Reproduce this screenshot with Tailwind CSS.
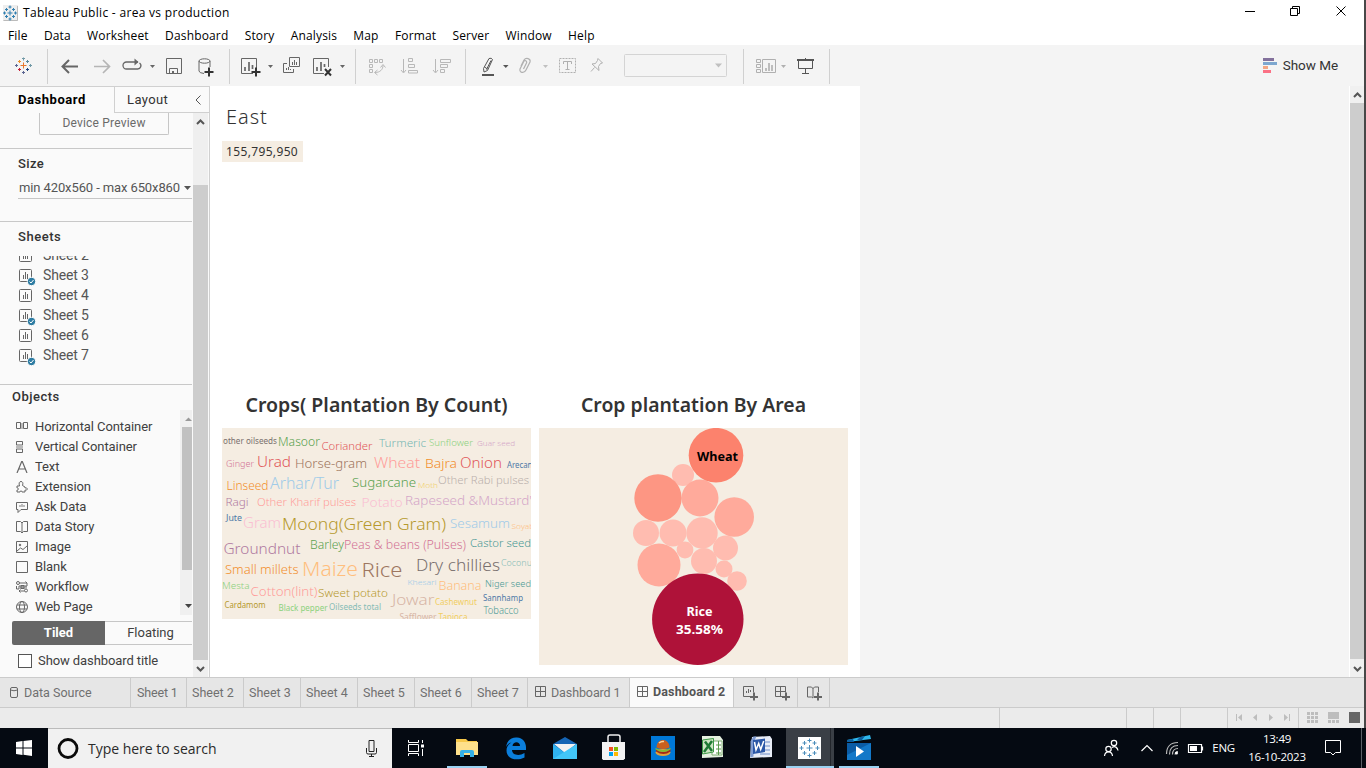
<!DOCTYPE html>
<html lang="en">
<head>
<meta charset="utf-8">
<title>Tableau Public - area vs production</title>
<script src="https://cdn.jsdelivr.net/npm/@tailwindcss/browser@4"></script>
</head>
<body class="w-[1366px] h-[768px] overflow-hidden bg-white font-['Roboto',sans-serif] text-[13px] text-[#555]">
<!-- shared symbols -->
<svg class="hidden">
  <symbol id="sheet" viewBox="0 0 17 17" fill="none" stroke="#666"><rect x=".5" y=".5" width="12" height="12" rx="1"/><path d="M4.5 6v4M6.5 3v7M8.5 5v5"/></symbol>
  <symbol id="sheetc" viewBox="0 0 17 17" fill="none" stroke="#666"><rect x=".5" y=".5" width="12" height="12" rx="1"/><path d="M4.500 6v4M6.5 3v7M8.5 5v5"/><circle cx="12.500" cy="12.500" r="4.200" fill="#2f7da3" stroke="#fafafa"/><path d="M10.500 12.500l1.500 1.500 2.500-3" stroke="#fff"/></symbol>
  <symbol id="grid" viewBox="0 0 12 12" fill="none" stroke="#666"><path d="M.5.5h10v10H.5zM5.500.5v10M.5 5.500h10"/></symbol>
</svg>
<div class="flex h-[728px]">
<div class="w-[1364px] flex flex-col">
  <!-- title bar -->
  <div class="h-[25px] flex items-center bg-white text-black font-['Open_Sans','Noto_Sans',sans-serif] text-[12px]">
    <svg class="ml-[3px] mr-[5px]" width="15" height="16" viewBox="0 0 15 16" fill="none"><path d="M0 0h15v16H0z" fill="#eee"/><path d="M.5 15.500h14V1" stroke="#bbb"/><path d="M7 5.500v5M4.500 8h5M7 .500v3M5.500 2h3M7 12.500v3M5.500 14h3M1.500 6.500v3M0 8h3M12.500 6.500v3M11 8h3M3.500 3v3M2 4.500h3M10.500 3v3M9 4.500h3M3.500 10v3M2 11.500h3M10.500 10v3M9 11.500h3" stroke="#2f7fb0"/></svg>
    <span class="grow tracking-[0.300px]">Tableau Public - area vs production</span>
    <svg width="120" height="24" viewBox="1244 0 120 24" fill="none" stroke="#000"><path d="M1245 10.500h10M1290.500 7.500h7v7h-7zM1292.500 7v-1.500h7v7h-1.500M1336.500 5.500l9 9M1345.500 5.500l-9 9"/></svg>
  </div>
  <!-- menu -->
  <div class="h-5 pt-[2px] flex items-center pl-2 gap-[16.300px] bg-white text-black font-['Open_Sans','Noto_Sans',sans-serif] text-[12px] tracking-[0.150px]">
    <span>File</span><span>Data</span><span>Worksheet</span><span>Dashboard</span><span>Story</span><span>Analysis</span><span>Map</span><span>Format</span><span>Server</span><span>Window</span><span>Help</span>
  </div>
  <!-- toolbar -->
  <div class="h-[41px] flex bg-[#f4f4f4]">
    <svg width="47" height="41" viewBox="0 45 47 41" fill="none" stroke-width="1"><g stroke="#e8762c"><path d="M23.500 62.500v6M20.500 65.500h6"/><path d="M19.500 60v3M18 61.500h3" stroke="#eb912b"/></g><path d="M27.500 60v3M26 61.500h3" stroke="#59879b"/><path d="M19.500 68v3M18 69.500h3" stroke="#c72037"/><path d="M27.500 68v3M26 69.500h3" stroke="#1f457e"/><path d="M23.500 57.500v3M22 58.500h3M30.500 64v3M29 65.500h3" stroke="#7199a6"/><path d="M23.500 71v3M22 72.500h3M16.500 64v3M15 65.500h3" stroke="#5b6591"/></svg>
    <svg width="182" height="41" viewBox="47 45 182 41" fill="none" stroke="#666"><path d="M47.500 49v35" stroke="#d0d0d0"/><path d="M78 66.500H63M69 60l-6.500 6.500 6.500 6.500" stroke-width="2"/><path d="M94 66.500h15M103 60l6.500 6.500-6.500 6.500" stroke="#b5b5b5" stroke-width="1.700"/><path d="M138 62h-11.500a3.300 3.300 0 0 0 0 7h11a3.300 3.300 0 0 0 2-6" stroke-width="1.300"/><path d="M134.500 58.500l4 3.500-4 3.500z" fill="#666" stroke="none"/><path d="M150 65h5l-2.500 3z" fill="#666" stroke="none"/><path d="M166.500 58.500h15v15h-15zM169.500 73.500v-5h8v5M172.500 71v2M173.500 71v2"/><ellipse cx="204.500" cy="61" rx="5.500" ry="2.200"/><path d="M199 61v10q0 2 5 2.500M210 61v6"/><path d="M209 67.500v9M204.500 72h9" stroke="#333" stroke-width="2"/></svg>
    <svg width="126" height="41" viewBox="229 45 126 41" fill="none" stroke="#666"><path d="M229.500 49v35" stroke="#d0d0d0"/><path d="M253 73.500h-11.500v-15h15V68"/><path d="M245 67v4M249 62v9M252.500 65v4" stroke-width="1.700"/><path d="M256 67.500v9M251.500 72h9" stroke="#333" stroke-width="2"/><path d="M268 65h5l-2.500 3zM340 65h5l-2.500 3z" fill="#666" stroke="none"/><path d="M289.500 57.500h10v9h-10zM287 63.500h-3.500v9h10V69M292.500 62v3M294.500 60v5M296.500 62v3M286.500 68v2M288.500 67v3M290.500 69v1"/><path d="M324 73.500h-10.500v-15h15V67"/><path d="M317 67v4M321 62v9M324.500 64v3" stroke-width="1.700"/><path d="M325 69l6 6.500M331 69l-6 6.500" stroke="#333" stroke-width="2"/></svg>
    <svg width="110" height="41" viewBox="355 45 110 41" fill="none" stroke="#b8b8b8"><path d="M355.500 49v35" stroke="#d0d0d0"/><path d="M369.500 59.500h3v3h-3zM374.500 59.500h3v3h-3zM379.500 59.500h3v3h-3zM369.500 64.500h3v3h-3zM369.500 69.500h3v3h-3zM375 72.500c5 0 8-3 8-7"/><path d="M380.500 67.500l2.500-3 2.500 3M377.500 70l-3 2.500 3 2.500"/><path d="M403.500 59v13M401 70l2.500 3 2.500-3M408.500 58.500h4v3h-4zM408.500 64.500h6v3h-6zM408.500 70.500h9v2.500h-9z"/><path d="M435.500 59v13M433 70l2.500 3 2.500-3M440.500 59.500h10v3h-10zM440.500 64.500h7v3h-7zM440.500 69.500h4v3h-4z"/></svg>
    <svg width="278" height="41" viewBox="465 45 278 41" fill="none" stroke="#b0b0b0"><path d="M465.500 49v35" stroke="#d0d0d0"/><g stroke="#555"><path d="M489 58.500q2.500-1 3.500 1l-5 11-3.500 1.500-.500-3.500z"/><path d="M484.500 67l3 2M486.500 69.500l4.500-9"/><path d="M482 75h12" stroke-width="2"/></g><path d="M503 65h5.500l-2.700 3z" fill="#555" stroke="none"/><path d="M543 65h5l-2.500 3zM715 63.500h7l-3.500 4z" fill="#c0c0c0" stroke="none"/><path d="M521 66l3-6c2-3 7-1.500 6 2l-4 8c-2 4-7 2.500-6-1l3.500-7c1-2.500 4-1 3 1l-3 6" stroke-width="1.200"/><path d="M559.500 58.500h16v14h-16z" stroke-dasharray="2 1"/><path d="M563.500 64v-2.500h8V64M567.500 62v8M565.500 69.500h4"/><path d="M598 58.500l4.500 4.500-2 .500-2 3 .500 4-7-6.500 3.500-.500 2-3zM594.500 67.500l-3.500 4"/><rect x="624.500" y="54.500" width="102" height="22" rx="1" stroke="#d4d4d4"/></svg>
    <svg width="88" height="41" viewBox="743 45 88 41" fill="none" stroke="#b0b0b0"><path d="M743.500 49v35M829.500 49v35" stroke="#d0d0d0"/><path d="M762.500 59.500h13v13h-13zM756.500 59.500h4v3h-4zM756.500 64.500h4v3h-4zM756.500 69.500h4v3h-4z"/><path d="M766 68v3M769 63v8M772 65v6" stroke-width="1.600"/><path d="M781 65h5l-2.500 3z" fill="#b0b0b0" stroke="none"/><g stroke="#555"><path d="M797 60h17" stroke-width="2"/><path d="M798.500 60v8.500h14V60M805.500 58v2M805.500 69v4M802 73.500h7"/></g></svg>
    <div class="grow"></div>
    <div class="flex items-center mr-[26px] text-[#333] text-[13.500px]">
      <svg class="mr-[6px]" width="15" height="15"><path d="M1 0h11v3H1z" fill="#83719c"/><path d="M1 4h14v3H1z" fill="#7da7cf"/><path d="M1 8h5v3H1z" fill="#f3a683"/><path d="M1 12h8v3H1z" fill="#fb7185"/></svg>
      <span class="tracking-[-0.050px]">Show Me</span>
    </div>
  </div>
  <!-- main area -->
  <div class="h-[591px] flex">
    <aside class="w-[210px] flex flex-col bg-[#fafafa] border-t border-r border-[#d0d0d0]">
      <div class="h-[26px] flex shrink-0">
        <div class="w-[114px] pl-[18px] leading-[25px] font-bold text-black tracking-[0.550px]">Dashboard</div>
        <div class="grow flex justify-between items-center border-l border-b border-[#d0d0d0] pl-3 pr-[8px] text-[#333] tracking-[0.400px]"><span>Layout</span><svg width="6" height="10" fill="none" stroke="#555"><path d="M5.500.500L1 5l4.500 4.500"/></svg></div>
      </div>
      <div class="h-[564px] flex">
        <div class="w-[192px] overflow-hidden">
          <section class="h-[35px]"><div class="ml-[39px] w-[130px] h-[22px] border border-t-0 border-[#c6c6c6] rounded-b-xs text-center leading-[20px] text-[12px] text-[#6a6a6a] tracking-[0.200px]">Device Preview</div></section>
          <section class="h-[73px] border-t border-[#c8c8c8] pl-[18px] pt-[5px]">
            <h3 class="leading-[19px] text-[#333] font-medium tracking-[0.350px]">Size</h3>
            <div class="mt-[6px] h-[20px] border-b border-[#c6c6c6] flex items-center gap-1 whitespace-nowrap pl-px tracking-[-0.110px] pb-px">min 420x560 - max 650x860<svg width="7" height="4" fill="#555"><path d="M0 0h7L3.500 4z"/></svg></div>
          </section>
          <section class="h-[163px] border-t border-[#c8c8c8]">
            <h3 class="h-[34px] pl-[18px] leading-[29px] text-[#333] font-medium tracking-[0.550px]">Sheets</h3>
            <div class="h-[120px] overflow-hidden pl-[19px] text-[14px] tracking-[-0.150px]">
              <div class="-mt-[11px] h-5 flex items-center gap-[7px]"><svg class="w-[17px] h-[17px] mt-1"><use href="#sheet"/></svg>Sheet 2</div>
              <div class="h-5 flex items-center gap-[7px]"><svg class="w-[17px] h-[17px] mt-1"><use href="#sheetc"/></svg>Sheet 3</div>
              <div class="h-5 flex items-center gap-[7px]"><svg class="w-[17px] h-[17px] mt-1"><use href="#sheet"/></svg>Sheet 4</div>
              <div class="h-5 flex items-center gap-[7px]"><svg class="w-[17px] h-[17px] mt-1"><use href="#sheetc"/></svg>Sheet 5</div>
              <div class="h-5 flex items-center gap-[7px]"><svg class="w-[17px] h-[17px] mt-1"><use href="#sheet"/></svg>Sheet 6</div>
              <div class="h-5 flex items-center gap-[7px]"><svg class="w-[17px] h-[17px] mt-1"><use href="#sheetc"/></svg>Sheet 7</div>
            </div>
          </section>
          <section class="h-[293px] border-t border-[#c8c8c8]">
            <h3 class="h-[25px] pl-3 leading-[24px] text-[#333] font-medium tracking-[0.500px]">Objects</h3>
            <div class="h-[205px] flex overflow-hidden">
              <div class="w-[180px] pt-[7px] pl-4 text-[#404040] text-[13px] tracking-[-0.080px]">
                <div class="h-5 flex items-center gap-[7px]"><svg width="12" height="12" fill="none" stroke="#666"><path d="M.5 1.500h4v6h-4zM7.500 1.500h4v6h-4z"/><path d="M5 2h2v6H5z" fill="#bbb" stroke="none"/></svg>Horizontal Container</div>
                <div class="h-5 flex items-center gap-[7px]"><svg width="12" height="12" fill="none" stroke="#666"><path d="M.5.500h6v3.500h-6zM.5 8h6v3.500h-6z"/><path d="M0 4.500h7v3H0z" fill="#bbb" stroke="none"/></svg>Vertical Container</div>
                <div class="h-5 flex items-center gap-[7px]"><svg width="12" height="12" fill="none" stroke="#666" stroke-width="1.200"><path d="M1 12L5.700.500h.6L11 12M3 8h6"/></svg>Text</div>
                <div class="h-5 flex items-center gap-[7px]"><svg width="12" height="12" fill="none" stroke="#666"><path d="M1 5h2.500c-1-3 0-4.500 1.500-4.500S7.500 2 6.500 4.500L9 6v1c3-1 3 3 0 2v2H6c0-1.500-2-1.500-2 0H1V9c2 0 2-2 0-2z"/></svg>Extension</div>
                <div class="h-5 flex items-center gap-[7px]"><svg width="12" height="12" fill="none" stroke="#666"><path d="M.5 1.500h11v7H5l-3 3v-3H.5z"/><path d="M3 4h2V3h2v1h2v2H3z" fill="#bbb" stroke="none"/></svg>Ask Data</div>
                <div class="h-5 flex items-center gap-[7px]"><svg width="12" height="12" fill="none" stroke="#666"><path d="M6 2L4.500.500h-4v10h4L6 12l1.500-1.500h4v-10h-4zM6 2v10"/></svg>Data Story</div>
                <div class="h-5 flex items-center gap-[7px]"><svg width="12" height="12" fill="none" stroke="#666"><path d="M.5.500h11v11H.5zM1 10l3.500-3L7 8.500 11 5"/><circle cx="4" cy="4" r=".8" fill="#666"/></svg>Image</div>
                <div class="h-5 flex items-center gap-[7px]"><svg width="12" height="12" fill="none" stroke="#666"><path d="M.5.500h11v11H.5z"/></svg>Blank</div>
                <div class="h-5 flex items-center gap-[7px]"><svg width="12" height="12" fill="none" stroke="#666"><circle cx="2" cy="2" r="1.500"/><path d="M3.500 2H11v3H3v3H.500V5M4 7h5M10 5v2.500M3.500 10h5M4.500 8.500L3 10l1.500 1.500M9.500 .500L11 2"/><circle cx="10" cy="9.500" r="1.500"/><path d="M5 4.500h3v3H5z" fill="#999"/></svg>Workflow</div>
                <div class="h-5 flex items-center gap-[7px]"><svg width="12" height="12" fill="none" stroke="#666"><circle cx="6" cy="6" r="5.500"/><ellipse cx="6" cy="6" rx="2.500" ry="5.500"/><path d="M1 4h10M1 8h10"/></svg>Web Page</div>
              </div>
              <div class="w-3 bg-[#f0f0f0] flex flex-col">
                <svg width="12" height="17"><path d="M5 11h7L8.500 7.500z" fill="#999"/></svg>
                <div class="ml-[2px] h-[143px] bg-[#c1c1c1]"></div>
                <svg width="12" height="45"><path d="M5 34h7L8.500 38z" fill="#444"/></svg>
              </div>
            </div>
            <div class="mt-[6px] ml-3 h-6 flex text-center leading-[23px]"><div class="w-[93px] rounded-l-xs bg-[#666] text-white font-bold">Tiled</div><div class="grow border-y border-[#c6c6c6] leading-[22px] text-[#404040] pl-[4px]">Floating</div></div>
            <div class="mt-[6px] ml-[18px] flex items-center gap-[6px] text-[#404040] tracking-[-0.090px]"><i class="w-[14px] h-[14px] border border-[#555] bg-white"></i>Show dashboard title</div>
          </section>
        </div>
        <div class="ml-px w-[15px] bg-[#efefef]">
          <svg width="15" height="72"><path d="M4 11l3.500-3.500L11 11" fill="none" stroke="#555" stroke-width="2"/></svg>
          <div class="h-[475px] bg-[#cdcdcd]"></div>
          <svg width="15" height="17"><path d="M4 7l3.500 3.500L11 7" fill="none" stroke="#555" stroke-width="2"/></svg>
        </div>
      </div>
    </aside>
    <main class="w-[650px] bg-white pl-3 pt-[16px] font-['Noto_Sans',sans-serif] text-[#333]">
      <h1 class="pl-1 h-[39px] leading-[30px] text-[20px] font-light tracking-[0.950px]">East</h1>
      <div class="w-[81px] h-[21px] bg-[#f5ede2] pl-1 leading-[21px] text-[12px] tracking-[0.350px]">155,795,950</div>
      <div class="mt-[230px] flex gap-2">
        <div class="w-[309px]">
          <h2 class="h-[36px] text-center leading-[26px] text-[19px] font-semibold"><svg width="309" height="36" viewBox="222 392 309 36" fill="#333"><text x="245.500" y="412" textLength="262" lengthAdjust="spacingAndGlyphs">Crops( Plantation By Count)</text></svg></h2>
          <!-- word cloud -->
          <svg class="bg-[#f5ede2] overflow-hidden" width="309" height="191" viewBox="222 428 309 191">
<g class="font-['Noto_Sans',sans-serif] font-light">
<text x="223" y="444" font-size="8" textLength="54" lengthAdjust="spacingAndGlyphs" font-weight="400" fill="#79706e">other oilseeds</text>
<text x="278" y="446" font-size="12" textLength="42" lengthAdjust="spacingAndGlyphs" fill="#59a14f">Masoor</text>
<text x="321.500" y="450" font-size="11" textLength="51" lengthAdjust="spacingAndGlyphs" fill="#e15759">Coriander</text>
<text x="379" y="447" font-size="11.500" textLength="47" lengthAdjust="spacingAndGlyphs" fill="#76b7b2">Turmeric</text>
<text x="429" y="446" font-size="9" textLength="44" lengthAdjust="spacingAndGlyphs" fill="#8cd17d">Sunflower</text>
<text x="477" y="446" font-size="8" textLength="38" lengthAdjust="spacingAndGlyphs" fill="#d4a6c8">Guar seed</text>
<text x="226" y="467" font-size="9.500" textLength="28" lengthAdjust="spacingAndGlyphs" fill="#d37295">Ginger</text>
<text x="257" y="467" font-size="15" textLength="34" lengthAdjust="spacingAndGlyphs" fill="#e15759">Urad</text>
<text x="295" y="468" font-size="13" textLength="72" lengthAdjust="spacingAndGlyphs" fill="#9d7660">Horse-gram</text>
<text x="374" y="468" font-size="15" textLength="46" lengthAdjust="spacingAndGlyphs" fill="#ff9d9a">Wheat</text>
<text x="425" y="468" font-size="13" textLength="32" lengthAdjust="spacingAndGlyphs" fill="#f28e2b">Bajra</text>
<text x="460" y="468" font-size="15" textLength="42" lengthAdjust="spacingAndGlyphs" fill="#e15759">Onion</text>
<text x="507" y="468" font-size="8" textLength="33" lengthAdjust="spacingAndGlyphs" font-weight="400" fill="#4e79a7">Arecanut</text>
<text x="226.500" y="490" font-size="12" textLength="42" lengthAdjust="spacingAndGlyphs" fill="#f28e2b">Linseed</text>
<text x="270" y="489" font-size="15.500" textLength="69" lengthAdjust="spacingAndGlyphs" fill="#a0cbe8">Arhar/Tur</text>
<text x="352" y="487" font-size="12.500" textLength="64" lengthAdjust="spacingAndGlyphs" fill="#59a14f">Sugarcane</text>
<text x="418" y="487.500" font-size="8" textLength="20" lengthAdjust="spacingAndGlyphs" fill="#f1ce63">Moth</text>
<text x="438" y="484" font-size="11" textLength="91" lengthAdjust="spacingAndGlyphs" fill="#bab0ac">Other Rabi pulses</text>
<text x="225.500" y="506" font-size="11" textLength="23" lengthAdjust="spacingAndGlyphs" fill="#b07aa1">Ragi</text>
<text x="257" y="506" font-size="11" textLength="99" lengthAdjust="spacingAndGlyphs" fill="#ff9d9a">Other Kharif pulses</text>
<text x="361.500" y="507" font-size="12.500" textLength="41" lengthAdjust="spacingAndGlyphs" fill="#fabfd2">Potato</text>
<text x="405" y="505" font-size="12.500" textLength="127" lengthAdjust="spacingAndGlyphs" fill="#d4a6c8">Rapeseed &amp;Mustard'</text>
<text x="226" y="521" font-size="8" textLength="16" lengthAdjust="spacingAndGlyphs" font-weight="400" fill="#4e79a7">Jute</text>
<text x="243" y="528" font-size="15" textLength="38" lengthAdjust="spacingAndGlyphs" fill="#fabfd2">Gram</text>
<text x="282" y="530" font-size="17" textLength="164" lengthAdjust="spacingAndGlyphs" fill="#b6992d">Moong(Green Gram)</text>
<text x="450" y="528" font-size="13" textLength="60" lengthAdjust="spacingAndGlyphs" fill="#a0cbe8">Sesamum</text>
<text x="511.500" y="529" font-size="8" textLength="37" lengthAdjust="spacingAndGlyphs" fill="#ffbe7d">Soyabean</text>
<text x="223.500" y="554" font-size="15" textLength="77" lengthAdjust="spacingAndGlyphs" fill="#b07aa1">Groundnut</text>
<text x="310" y="549" font-size="12" textLength="34" lengthAdjust="spacingAndGlyphs" fill="#59a14f">Barley</text>
<text x="344" y="549" font-size="12" textLength="122" lengthAdjust="spacingAndGlyphs" fill="#d37295">Peas &amp; beans (Pulses)</text>
<text x="470" y="547" font-size="11.500" textLength="61" lengthAdjust="spacingAndGlyphs" fill="#499894">Castor seed</text>
<text x="225" y="574" font-size="12" textLength="73.500" lengthAdjust="spacingAndGlyphs" fill="#f28e2b">Small millets</text>
<text x="302" y="576" font-size="20" textLength="56" lengthAdjust="spacingAndGlyphs" fill="#ffbe7d">Maize</text>
<text x="361.500" y="577" font-size="20" textLength="41" lengthAdjust="spacingAndGlyphs" fill="#9d7660">Rice</text>
<text x="416" y="571" font-size="15.500" textLength="84" lengthAdjust="spacingAndGlyphs" fill="#79706e">Dry chillies</text>
<text x="501" y="566" font-size="9" textLength="34" lengthAdjust="spacingAndGlyphs" fill="#86bcb6">Coconut</text>
<text x="222" y="589" font-size="9" textLength="27.500" lengthAdjust="spacingAndGlyphs" fill="#8cd17d">Mesta</text>
<text x="250.500" y="596" font-size="12.500" textLength="67" lengthAdjust="spacingAndGlyphs" fill="#ff9d9a">Cotton(lint)</text>
<text x="318" y="597" font-size="11.500" textLength="70" lengthAdjust="spacingAndGlyphs" fill="#b6992d">Sweet potato</text>
<text x="407.500" y="585" font-size="8" textLength="29" lengthAdjust="spacingAndGlyphs" fill="#a0cbe8">Khesari</text>
<text x="438.500" y="590" font-size="12" textLength="43" lengthAdjust="spacingAndGlyphs" fill="#ffbe7d">Banana</text>
<text x="485" y="587" font-size="9.500" textLength="46" lengthAdjust="spacingAndGlyphs" fill="#499894">Niger seed</text>
<text x="224.500" y="608" font-size="8" textLength="41" lengthAdjust="spacingAndGlyphs" font-weight="400" fill="#b6992d">Cardamom</text>
<text x="278.500" y="611" font-size="8" textLength="49" lengthAdjust="spacingAndGlyphs" font-weight="400" fill="#8cd17d">Black pepper</text>
<text x="329" y="610" font-size="8" textLength="52" lengthAdjust="spacingAndGlyphs" font-weight="400" fill="#86bcb6">Oilseeds total</text>
<text x="392" y="605" font-size="15" textLength="42.500" lengthAdjust="spacingAndGlyphs" fill="#d7b5a6">Jowar</text>
<text x="435" y="605" font-size="8" textLength="42" lengthAdjust="spacingAndGlyphs" font-weight="400" fill="#f1ce63">Cashewnut</text>
<text x="483" y="601" font-size="8" textLength="40" lengthAdjust="spacingAndGlyphs" font-weight="400" fill="#4e79a7">Sannhamp</text>
<text x="483.500" y="614" font-size="10" textLength="35" lengthAdjust="spacingAndGlyphs" fill="#499894">Tobacco</text>
<text x="399.500" y="620" font-size="8" textLength="37" lengthAdjust="spacingAndGlyphs" font-weight="400" fill="#d7b5a6">Safflower</text>
<text x="438.500" y="620" font-size="8" textLength="29" lengthAdjust="spacingAndGlyphs" font-weight="400" fill="#f1ce63">Tapioca</text>
</g></svg>
        </div>
        <div class="w-[309px]">
          <h2 class="h-[36px] leading-[26px] text-[19px] font-semibold"><svg width="309" height="36" viewBox="539 392 309 36" fill="#333"><text x="581" y="412" textLength="225" lengthAdjust="spacingAndGlyphs">Crop plantation By Area</text></svg></h2>
          <!-- packed bubbles -->
          <svg class="bg-[#f5ede2]" width="309" height="237" viewBox="539 428 309 237">
<g fill="#ffbcb0"><circle cx="683" cy="475" r="11"/><circle cx="646" cy="533" r="13"/><circle cx="673" cy="533" r="13.500"/><circle cx="702" cy="533" r="15.700"/><circle cx="725.500" cy="548" r="12.500"/><circle cx="685" cy="550" r="8.400"/><circle cx="704" cy="561" r="13"/><circle cx="724" cy="569" r="8.500"/><circle cx="737" cy="581" r="9.800"/></g>
<g fill="#ffaa9b"><circle cx="700" cy="498" r="18.500"/><circle cx="734.200" cy="517" r="19.800"/><circle cx="659" cy="565" r="21.500"/></g>
<circle cx="658" cy="498" r="23.700" fill="#fd9683"/><circle cx="716" cy="455.200" r="27.300" fill="#fc826d"/><circle cx="697.800" cy="619.300" r="45.700" fill="#af1239"/>
<g font-size="12.500" font-weight="700" class="font-['Noto_Sans',sans-serif]"><text x="697" y="461" textLength="41" lengthAdjust="spacingAndGlyphs" fill="#000">Wheat</text><g fill="#fff"><text x="686.500" y="616" textLength="26" lengthAdjust="spacingAndGlyphs">Rice</text><text x="676" y="634" textLength="47" lengthAdjust="spacingAndGlyphs">35.58%</text></g></g></svg>
        </div>
      </div>
    </main>
    <div class="grow bg-[#f4f4f4]"></div>
    <div class="w-[15px] border-l border-white bg-[#f0f0f0]">
      <svg width="14" height="17"><path d="M4 11l3.500-3.500L11 11" fill="none" stroke="#555" stroke-width="2"/></svg>
      <div class="h-[556px] bg-[#cdcdcd]"></div>
      <svg width="14" height="18"><path d="M4 8l3.500 3.500L11 8" fill="none" stroke="#555" stroke-width="2"/></svg>
    </div>
  </div>
  <!-- sheet tabs -->
  <div class="h-[31px] flex bg-[#e6e6e6] border-y border-[#cbcbcb] text-[#707070] text-[12.500px] leading-[29px] whitespace-nowrap">
    <div class="w-[131px] border-r border-[#cbcbcb] pl-[10px] flex items-center gap-[6px]"><svg width="8" height="12" fill="none" stroke="#666"><rect x=".5" y=".5" width="7" height="10" rx="1.500"/><path d="M.5 3q3.500 1.500 7 0"/></svg>Data Source</div>
    <div class="w-[56px] border-r border-[#cbcbcb] pl-[6px] tracking-[-0.150px]">Sheet 1</div>
    <div class="w-[57px] border-r border-[#cbcbcb] pl-[5px]">Sheet 2</div>
    <div class="w-[57px] border-r border-[#cbcbcb] pl-[5px]">Sheet 3</div>
    <div class="w-[57px] border-r border-[#cbcbcb] pl-[5px]">Sheet 4</div>
    <div class="w-[57px] border-r border-[#cbcbcb] pl-[5px]">Sheet 5</div>
    <div class="w-[57px] border-r border-[#cbcbcb] pl-[5px]">Sheet 6</div>
    <div class="w-[56px] border-r border-[#cbcbcb] pl-[5px]">Sheet 7</div>
    <div class="w-[102px] border-r border-[#cbcbcb] pl-[7px] flex items-center gap-1 tracking-[-0.100px]"><svg class="w-3 h-3 -mt-px"><use href="#grid"/></svg>Dashboard 1</div>
    <div class="w-[104px] border-r border-[#cbcbcb] pl-[7px] flex items-center gap-1 bg-[#fafafa] font-bold text-[#555] tracking-[0.150px]"><svg class="w-3 h-3 -mt-px"><use href="#grid"/></svg><span class="-mt-[3px]">Dashboard 2</span></div>
    <svg class="border-r border-[#cbcbcb]" width="32" height="29" viewBox="734 678 31 29" fill="none" stroke="#666"><path d="M752 696.500h-8.500v-10h10v6M746.500 691v2M748.500 689v4M750.500 690v2"/><path d="M754 692.500v8M750 697h8" stroke-width="2"/></svg>
    <svg class="border-r border-[#cbcbcb]" width="32" height="29" viewBox="766 678 31 29" fill="none" stroke="#666"><path d="M783 696.500h-7.500v-10h10v6M780.500 686.500v10M775.500 691.500h10"/><path d="M786 692.500v8M782 697h8" stroke-width="2"/></svg>
    <svg class="border-r border-[#cbcbcb]" width="32" height="29" viewBox="798 678 31 29" fill="none" stroke="#666"><path d="M813 698l-1.500-1h-4v-10h4l1.500 1.500 1.500-1.500h4v5M813 688v10"/><path d="M818 692.500v8M814 697h8" stroke-width="2"/></svg>
  </div>
  <!-- status bar -->
  <div class="h-5 flex justify-end bg-[#ebebeb]">
    <div class="w-[127px] border-l border-[#cbcbcb]"></div><div class="w-[27px] border-l border-[#cbcbcb]"></div><div class="w-[27px] border-l border-[#cbcbcb]"></div><div class="w-[47px] border-l border-[#cbcbcb]"></div>
    <svg class="border-l border-[#cbcbcb]" width="71" height="20" viewBox="1228 708 70 20" fill="#bdbdbd"><path d="M1236 714h1v7h-1zM1242 714v7l-4-3.500zM1257 714v7l-4-3.500zM1269 714v7l4-3.500zM1284 714v7l4-3.500zM1289 714h1v7h-1z"/></svg>
    <svg class="border-l border-[#cbcbcb]" width="66" height="20" viewBox="1299 708 65 20" fill="#bdbdbd"><path d="M1307 712h3v3h-3zM1311 712h3v3h-3zM1315 712h3v3h-3zM1307 716h3v3h-3zM1311 716h3v3h-3zM1315 716h3v3h-3zM1307 720h3v3h-3zM1311 720h3v3h-3zM1315 720h3v3h-3zM1328 712h11v7h-11zM1328 720h3v3h-3zM1332 720h3v3h-3zM1336 720h3v3h-3z"/><path d="M1349 712h11v11h-11z" fill="#666"/></svg>
  </div>
</div>
<div class="w-[2px] bg-[#484848]"></div>
</div>
<!-- taskbar -->
<div class="h-10 flex bg-[#050a12] text-white font-['Open_Sans','Noto_Sans',sans-serif]">
  <svg width="48" height="40" viewBox="0 728 48 40" fill="#fff"><path d="M16 742l6.500-.900v6.400H16zM23.500 741l8.500-1v7.500h-8.500zM16 748.500h6.500v6.400l-6.500-.900zM23.500 748.500H32v7.500l-8.500-1.200z"/></svg>
  <div class="w-[344px] bg-[#f1f1f1] border-t border-[#bbb] flex items-center text-[#2b2b2b] text-[14px]">
    <svg class="ml-2" width="24" height="24"><circle cx="12" cy="11.500" r="9" fill="none" stroke="#0a0a0a" stroke-width="2.800"/></svg>
    <span class="ml-2 grow tracking-[-0.020px]">Type here to search</span>
    <svg class="mr-[14px]" width="13" height="17" fill="none" stroke="#222"><path d="M4 .500h5v11H4zM1.500 8v4.500q0 1.500 1.500 1.500h7q1.500 0 1.500-1.500V8M6.500 14v2.500M4 16.500h5"/></svg>
  </div>
  <svg width="50" height="40" viewBox="392 728 50 40" fill="none" stroke="#fff"><path d="M408.500 740v2.500h10V740M408.500 756v-2.500h10v2.500M408.500 744.500h10v7h-10zM422.500 740v3M422.500 749v7"/><path d="M421 744.500h3v3h-3z" fill="#fff" stroke="none"/></svg>
  <!-- file explorer -->
  <svg width="49" height="40" viewBox="442 728 49 40"><path d="M456 739h10l2 2h9v14h-21z" fill="#f7c84a"/><path d="M456 742h22v13h-22z" fill="#fee08b"/><path d="M460 757v-5q0-2 2-2h10q2 0 2 2v5h-4v-4h-6v4z" fill="#36b1e8"/><path d="M447 766h40v2h-40z" fill="#9bd2f2"/></svg>
  <!-- edge -->
  <svg width="49" height="40" viewBox="491 728 49 40"><path d="M506 747c1-7 6-10 11-9.500 6 .500 9 5 9 10v2.500h-14c0 5 7 6.500 12.500 3v4.500c-8 4-18 1.500-18-7 0-4 2-6.500 5-8-2 0-4 2-5.500 4.500zm6.500-1h7.500c0-5-7-5-7.500 0z" fill="#0b7edb"/></svg>
  <!-- mail -->
  <svg width="49" height="40" viewBox="540 728 49 40"><path d="M553 744l12-7 12 7v15h-24z" fill="#1565b5"/><path d="M554 744h22l-11 9z" fill="#f2f2f2"/><path d="M553 744l12 9 12-9v15h-24z" fill="#2fb1ee"/><path d="M553 759l24-15v15z" fill="#42c6f8"/></svg>
  <!-- store -->
  <svg width="49" height="40" viewBox="589 728 49 40"><path d="M608 742v-5q0-2 2-2h8q2 0 2 2v5" fill="none" stroke="#eee" stroke-width="1.500"/><path d="M602 742h23v16.500l-1.500 1.500H603l-1-1.500z" fill="#f3f3f3"/><path d="M609 747h4v4h-4z" fill="#f25022"/><path d="M614 747h4v4h-4z" fill="#7fba00"/><path d="M609 752h4v4h-4z" fill="#00a4ef"/><path d="M614 752h4v4h-4z" fill="#ffb900"/></svg>
  <!-- burger game -->
  <svg width="49" height="40" viewBox="638 728 49 40"><path d="M651 736h24v24h-24z" fill="#0078d7"/><ellipse cx="663" cy="752.500" rx="7.500" ry="3.500" fill="#e0a23c"/><path d="M656 749q7 6 14.500 0v2.500q-7 5-14.500 0z" fill="#a52a18"/><path d="M655.500 748q7.500 4 15 0v1.500q-7.500 5-15 0z" fill="#87b932"/><path d="M656.500 747.500c0-10 13-10 13 0q-6.500 3-13 0z" fill="#c9601f"/><path d="M659 743q2-2 5-1.500" stroke="#fbd49b" stroke-width="1.500" fill="none"/></svg>
  <!-- excel -->
  <svg width="49" height="40" viewBox="687 728 49 40"><path d="M702 736h18l3 4v17l-21 1z" fill="#e6f1e1"/><path d="M712 741h10v14h-10z" fill="#fff" stroke="#7fae74"/><path d="M716 745h5M716 749h5M716 753h5M718.500 741v14" stroke="#5a9a4d"/><path d="M702 740l12-2v14l-12 2z" fill="#cfe6c4"/><path d="M702.500 740l11-1.500v13.500l-11 2z" fill="none" stroke="#3e9a48"/><path d="M705 741.500l7 9.500M712 741l-8 11" stroke="#1f7a34" stroke-width="2.500"/></svg>
  <!-- word -->
  <svg width="49" height="40" viewBox="736 728 49 40"><path d="M752 737l18-1 2 3v18l-22 1z" fill="#e8edf7"/><path d="M764 742h6M764 746h6M761 750h9M760 754h10" stroke="#6f8dc7"/><path d="M750.500 741l3-4.500h3l-3 6v14l-3 1z" fill="#7f9bd2"/><path d="M753 740l12-1.500v13.500l-12 2z" fill="#2b57a7"/><path d="M754.500 742l1.500 8 2.700-6.500 2 6 3-8.500" fill="none" stroke="#fff" stroke-width="1.500"/></svg>
  <!-- tableau (active) -->
  <svg width="49" height="40" viewBox="785 728 49 40" fill="none"><path d="M786 728h48v40h-48z" fill="#3a3f46"/><path d="M830.500 728v40" stroke="#22262c"/><path d="M798 737h23v22h-23z" fill="#fff"/><path d="M809.500 745v6M806.500 748h6M809.500 738.500v4M807.500 740.500h4M809.500 753.500v4M807.500 755.500h4M801.500 746v4M799.500 748h4M817.500 746v4M815.500 748h4M804.500 741v4M802.500 743h4M814.500 741v4M812.500 743h4M804.500 751v4M802.500 753h4M814.500 751v4M812.500 753h4" stroke="#4a8dbb"/><path d="M786 766h48v2h-48z" fill="#9bd2f2"/></svg>
  <!-- video editor -->
  <svg width="49" height="40" viewBox="834 728 49 40"><path d="M847 740l23-5 1 4-23 3z" fill="#2fb7ec"/><path d="M847 740l6-1 1 3h-7zM860 737l5-1-3 4h-5z" fill="#0c5f9f"/><path d="M847 743h24v17h-24z" fill="#1378c8"/><path d="M847 743h24l-24 12z" fill="#0b5ca5"/><path d="M856 746v11l8-5.500z" fill="#fff"/><path d="M839 766h40v2h-40z" fill="#9bd2f2"/></svg>
  <div class="grow"></div>
  <svg width="105" height="40" viewBox="1099 728 105 40" fill="none" stroke="#fff" stroke-width="1.200"><circle cx="1108.500" cy="749" r="2.700"/><path d="M1104.500 756c.500-5.500 7.500-5.500 8 0"/><circle cx="1114" cy="743" r="2.700"/><path d="M1112 747.500c3-2 5.500 0 6 3"/><path d="M1141.500 751l5.500-5.500 5.500 5.500"/><g stroke="#bbb"><path d="M1166.500 754c0-7 4-11.500 11.500-11.500M1169.500 754.500c0-5.500 3-9 8.500-9M1172.500 754.500c0-3.500 2-6 5.500-6M1175 754.500q.500-3 3-3"/></g><circle cx="1176.500" cy="753" r="1.500" fill="#fff" stroke="none"/><path d="M1188.500 744.500h13v8h-13zM1202.500 746.500v4"/><path d="M1190 746h7v5h-7z" fill="#fff" stroke="none"/></svg>
  <span class="ml-2 text-[11.500px] leading-[39px] tracking-[-0.200px]">ENG</span>
  <div class="ml-[12px] w-[60px] text-[11.500px] leading-[18px] text-center pt-[2px] tracking-[-0.250px] whitespace-nowrap"><div>13:49</div><div>16-10-2023</div></div>
  <svg width="59" height="40" viewBox="1307 728 59 40" fill="none" stroke="#fff"><path d="M1325.500 740.500h15v12h-5l-2.500 2.500-2.500-2.500h-5z"/><path d="M1361.500 728v40" stroke="#5a5f66"/></svg>
</div>
</body>
</html>
